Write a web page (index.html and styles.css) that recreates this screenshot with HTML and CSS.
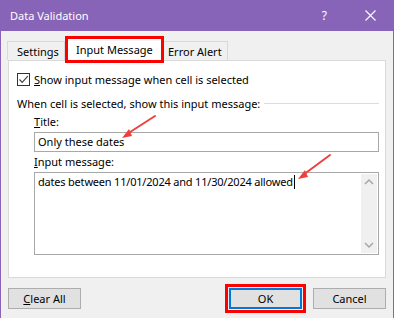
FILE: index.html
```html
<!DOCTYPE html>
<html lang="en">
<head>
<meta charset="UTF-8">
<title>Data Validation</title>
<link rel="stylesheet" href="styles.css">
</head>
<body>
<div class="dialog">
  <div class="titlebar">
    <span class="title">Data Validation</span>
    <span class="help">?</span>
    <svg class="close" width="11" height="11" viewBox="0 0 11 11">
      <path d="M0.5 0.5 L10.5 10.5 M10.5 0.5 L0.5 10.5" stroke="#fff" stroke-width="1.1" fill="none"/>
    </svg>
  </div>

  <div class="tabs">
    <div class="tab tab-settings">Settings</div>
    <div class="tab active">Input Message</div>
    <div class="tab tab-error">Error Alert</div>
  </div>

  <div class="panel">
    <label class="check-row">
      <span class="checkbox">
        <svg width="11" height="11" viewBox="0 0 11 11">
          <path d="M1.5 5.5 L4.2 8.3 L9.8 2.2" stroke="#444" stroke-width="1.2" fill="none"/>
        </svg>
      </span>
      <span><u>S</u>how input message when cell is selected</span>
    </label>

    <div class="group-label">
      <span>When cell is selected, show this input message:</span>
      <span class="rule"></span>
    </div>

    <div class="field">
      <div class="field-label"><u>T</u>itle:</div>
      <div class="textbox">Only these dates</div>
    </div>

    <div class="field">
      <div class="field-label"><u>I</u>nput message:</div>
      <div class="textarea">
        <div class="textarea-text">dates between 11/01/2024 and 11/30/2024 allowed<span class="caret"></span></div>
        <div class="scrollbar">
          <svg width="16" height="10" viewBox="0 0 16 10"><path d="M4 7 L8 3 L12 7" stroke="#a6a6a6" stroke-width="1.5" fill="none"/></svg>
          <svg width="16" height="10" viewBox="0 0 16 10"><path d="M4 3 L8 7 L12 3" stroke="#a6a6a6" stroke-width="1.5" fill="none"/></svg>
        </div>
      </div>
    </div>
  </div>

  <div class="buttons">
    <button class="btn"><u>C</u>lear All</button>
    <span class="spacer"></span>
    <button class="btn btn-ok">OK</button>
    <button class="btn">Cancel</button>
  </div>

  <!-- annotation arrows -->
  <svg class="arrows" width="394" height="318" viewBox="0 0 394 318">
    <g stroke="#ef4040" stroke-width="2" fill="none" stroke-linecap="round">
      <path d="M155 116 L127 134"/>
      <path d="M330 155 L303 175"/>
    </g>
    <g fill="#ef4040">
      <path d="M122 138 L129 129 L132 136 Z"/>
      <path d="M298 179 L305 170 L308 177 Z"/>
    </g>
  </svg>
</div>
</body>
</html>
```

FILE: styles.css
```css
body {
  margin: 0;
  font-family: "Noto Sans", "Open Sans", sans-serif;
  font-size: 11px;
  color: #000;
}
.dialog {
  position: relative;
  width: 394px;
  height: 318px;
  box-sizing: border-box;
  border-left: 1px solid #8764b8;
  border-right: 1px solid #8764b8;
  background-color: #f0f0f0;
  display: flex;
  flex-direction: column;
}
.titlebar {
  height: 31px;
  flex-shrink: 0;
  background-color: #8764b8;
  color: #fff;
  display: flex;
  align-items: center;
  padding-left: 9px;
  padding-right: 17px;
  font-size: 11px;
}
.title {
  flex: 1;
}
.help {
  margin-right: 38px;
  font-size: 12px;
}
.tabs {
  display: flex;
  align-items: flex-end;
  height: 29px;
  flex-shrink: 0;
  padding-left: 6px;
}
.tab {
  height: 19px;
  line-height: 19px;
  box-sizing: border-box;
  border: 1px solid #d9d9d9;
  border-bottom: none;
  background-color: #f0f0f0;
}
.tab-settings {
  width: 58px;
  padding-left: 9px;
}
.tab-error {
  width: 64px;
  padding-left: 4px;
  border-left: none;
}
.tab.active {
  width: 93px;
  height: 21px;
  line-height: 21px;
  border: none;
  background-color: #fff;
  padding-left: 8px;
  margin: 0 3px;
  outline: 3px solid #ff0000;
  position: relative;
  z-index: 2;
}
.panel {
  margin: 0 7px;
  height: 218px;
  flex-shrink: 0;
  background-color: #fff;
  border: 1px solid #d9d9d9;
  padding: 12px 6px 0 8px;
  box-sizing: border-box;
}
.check-row {
  display: flex;
  align-items: center;
  gap: 4px;
  height: 13px;
}
.checkbox {
  width: 13px;
  height: 13px;
  box-sizing: border-box;
  border: 1px solid #333;
  display: flex;
  align-items: center;
  justify-content: center;
}
.group-label {
  display: flex;
  align-items: center;
  margin-top: 9px;
  height: 16px;
}
.rule {
  flex: 1;
  height: 1px;
  background-color: #dcdcdc;
  margin-left: 4px;
}
.field {
  padding-left: 17px;
}
.field-label {
  height: 16px;
  line-height: 16px;
  margin-top: 3px;
}
.field + .field .field-label {
  margin-top: 2px;
}
.textbox {
  height: 20px;
  line-height: 18px;
  box-sizing: border-box;
  border: 1px solid #a8a8a8;
  padding-left: 3px;
  margin-top: 2px;
}
.textarea {
  margin-top: 2px;
  height: 83px;
  box-sizing: border-box;
  border: 1px solid #a8a8a8;
  display: flex;
}
.textarea-text {
  flex: 1;
  padding: 1px 3px;
  line-height: 16px;
  letter-spacing: -0.2px;
}
.caret {
  display: inline-block;
  width: 1px;
  height: 14px;
  background-color: #000;
  vertical-align: -3px;
  margin-left: 1px;
}
.scrollbar {
  width: 16px;
  margin: 1px 1px 1px 0;
  background-color: #f0f0f0;
  display: flex;
  flex-direction: column;
  justify-content: space-between;
  padding: 3px 0;
}
.buttons {
  display: flex;
  padding: 10px 7px 0 7px;
}
.spacer {
  flex: 1;
}
.btn {
  width: 73px;
  height: 21px;
  box-sizing: border-box;
  border: 1px solid #adadad;
  background-color: #e1e1e1;
  font-family: inherit;
  font-size: 11px;
  padding: 0;
  color: #000;
}
.btn-ok {
  border: 2px solid #0078d7;
  margin-right: 11px;
  outline: 3px solid #ff0000;
  outline-offset: 1px;
}
.arrows {
  position: absolute;
  top: 0;
  left: -1px;
  pointer-events: none;
}
```
